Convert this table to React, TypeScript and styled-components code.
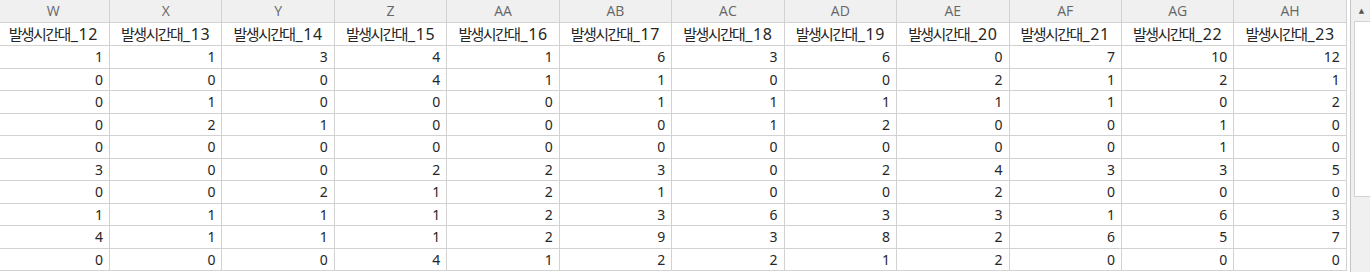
import styled, { createGlobalStyle } from "styled-components";

const columns = ["W", "X", "Y", "Z", "AA", "AB", "AC", "AD", "AE", "AF", "AG", "AH"];

const rows = [
    [1, 1, 3, 4, 1, 6, 3, 6, 0, 7, 10, 12],
    [0, 0, 0, 4, 1, 1, 0, 0, 2, 1, 2, 1],
    [0, 1, 0, 0, 0, 1, 1, 1, 1, 1, 0, 2],
    [0, 2, 1, 0, 0, 0, 1, 2, 0, 0, 1, 0],
    [0, 0, 0, 0, 0, 0, 0, 0, 0, 0, 1, 0],
    [3, 0, 0, 2, 2, 3, 0, 2, 4, 3, 3, 5],
    [0, 0, 2, 1, 2, 1, 0, 0, 2, 0, 0, 0],
    [1, 1, 1, 1, 2, 3, 6, 3, 3, 1, 6, 3],
    [4, 1, 1, 1, 2, 9, 3, 8, 2, 6, 5, 7],
    [0, 0, 0, 4, 1, 2, 2, 1, 2, 0, 0, 0],
];

const GlobalStyle = createGlobalStyle`
    html, body {
        margin: 0;
        padding: 0;
        background: #fff;
        overflow: hidden;
    }
    * {
        box-sizing: border-box;
    }
`

export default function App() {
    return (
        <>
            <GlobalStyle />
            <Frame>
                <SheetArea>
                    <Sheet>
                        {columns.map((c) => (
                            <ColHead key={c}>{c}</ColHead>
                        ))}
                        {columns.map((c, i) => (
                            <NameCell key={"n" + c}>
                                <Hangul>발생시간대</Hangul>
                                <Suffix>_{12 + i}</Suffix>
                            </NameCell>
                        ))}
                        {rows.map((r, ri) =>
                            r.map((v, ci) => <NumCell key={ri + "-" + ci}>{v}</NumCell>)
                        )}
                    </Sheet>
                </SheetArea>
                <ScrollBar>
                    <ArrowButton>▲</ArrowButton>
                    <Thumb />
                </ScrollBar>
            </Frame>
        </>
    )
}

const Frame = styled.div`
    display: flex;
    width: 1370px;
    height: 272px;
    overflow: hidden;
    background: #fff;
`

const SheetArea = styled.div`
    width: 1350px;
    flex: none;
    overflow: hidden;
`

const Sheet = styled.div`
    display: grid;
    grid-template-columns: repeat(12, 112.45px);
    grid-template-rows: 23px 23px;
    grid-auto-rows: 22.5px;
    margin-left: -2.45px;
    width: max-content;
`

const Cell = styled.div`
    border-right: 1px solid #d2d2d2;
    border-bottom: 1px solid #d2d2d2;
    display: flex;
    align-items: center;
    overflow: hidden;
    white-space: nowrap;
`

const ColHead = styled(Cell)`
    justify-content: center;
    background: #f0f0f0;
    color: #666;
    font-family: "Open Sans", "Noto Sans", sans-serif;
    font-size: 14px;
    padding-bottom: 1px;
`

const NameCell = styled(Cell)`
    justify-content: center;
    color: #262626;
    padding-bottom: 1px;
`

const Hangul = styled.span`
    font-family: "Noto Sans CJK KR", sans-serif;
    font-size: 15px;
    letter-spacing: -1.6px;
`

const Suffix = styled.span`
    font-family: "Noto Sans", sans-serif;
    font-size: 16px;
    letter-spacing: 0.6px;
    margin-left: 1px;
`

const NumCell = styled(Cell)`
    justify-content: flex-end;
    padding-right: 6px;
    color: #262626;
    font-family: "Noto Sans", sans-serif;
    font-size: 14px;
`

const ScrollBar = styled.div`
    flex: 1;
    display: flex;
    flex-direction: column;
    align-items: flex-end;
    background: #f0f0f0;
    border-left: 1px solid #c4c4c4;
`

const ArrowButton = styled.div`
    width: 100%;
    height: 21px;
    display: flex;
    justify-content: center;
    align-items: center;
    padding-left: 2px;
    color: #555;
    font-family: "DejaVu Sans", sans-serif;
    font-size: 7px;
`

const Thumb = styled.div`
    width: 16px;
    height: 176px;
    background: #fff;
    border: 1px solid #d2d2d2;
    border-right: none;
`
